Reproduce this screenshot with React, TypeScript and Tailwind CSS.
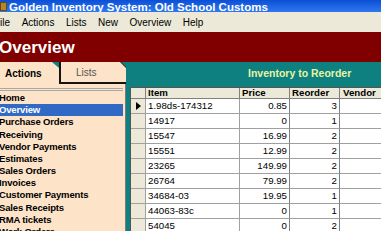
import { Fragment } from 'react';

const menus = ['File', 'Actions', 'Lists', 'New', 'Overview', 'Help'];

const actions = [
  'Home',
  'Overview',
  'Purchase Orders',
  'Receiving',
  'Vendor Payments',
  'Estimates',
  'Sales Orders',
  'Invoices',
  'Customer Payments',
  'Sales Receipts',
  'RMA tickets',
  'Work Orders',
  'Shipping',
];

interface ReorderRow {
  item: string;
  price: string;
  reorder: number;
}

const rows: ReorderRow[] = [
  { item: '1.98ds-174312', price: '0.85', reorder: 3 },
  { item: '14917', price: '0', reorder: 1 },
  { item: '15547', price: '16.99', reorder: 2 },
  { item: '15551', price: '12.99', reorder: 2 },
  { item: '23265', price: '149.99', reorder: 2 },
  { item: '26764', price: '79.99', reorder: 2 },
  { item: '34684-03', price: '19.95', reorder: 1 },
  { item: '44063-83c', price: '0', reorder: 1 },
  { item: '54045', price: '0', reorder: 2 },
];

const font = { fontFamily: '"Liberation Sans", Arial, sans-serif' };

export default function App() {
  return (
    <div className="w-[381px] h-[231px] overflow-hidden bg-[#0e8080] flex flex-col" style={font}>
      {/* Title bar */}
      <div className="h-[12px] shrink-0 bg-gradient-to-b from-[#0a4fd6] to-[#2f78f0] flex items-end overflow-hidden">
        <div className="w-[7px] h-[9px] mb-[1px] bg-[#b8862a] border border-[#6b4a12] shrink-0" />
        <span className="ml-[2px] text-white font-bold text-[11.5px] leading-[12px] whitespace-nowrap -mb-[1px]">
          Golden Inventory System: Old School Customs
        </span>
      </div>

      {/* Menu bar */}
      <div className="h-[20px] shrink-0 bg-[#ece9d8] flex items-center gap-[11.5px] -ml-[6px] text-[10px] text-black">
        {menus.map((m) => (
          <span key={m} className="whitespace-nowrap">{m}</span>
        ))}
      </div>

      {/* Page header */}
      <div className="h-[30px] shrink-0 bg-[#800000] flex items-center">
        <span className="-ml-[1px] text-white font-bold text-[17px] leading-none">Overview</span>
      </div>

      <div className="flex-1 flex min-h-0">
        {/* Left panel */}
        <div className="w-[126px] shrink-0 flex flex-col min-h-0">
          <div className="h-[22px] shrink-0 flex bg-[#0e8080]">
            <div className="w-[59px] bg-[#fde4c8] [clip-path:polygon(0_0,calc(100%-7px)_0,100%_6px,100%_100%,0_100%)] flex items-center pl-[5px] pt-[1px] text-[10px] font-bold text-black">
              Actions
            </div>
            <div className="flex-1 bg-[#141414] [clip-path:polygon(0_0,calc(100%-5px)_0,100%_5px,100%_100%,0_100%)] pl-[2px] pb-[2px]">
              <div className="h-full bg-[#fde4c8] [clip-path:polygon(0_0,calc(100%-6px)_0,100%_6px,100%_100%,0_100%)] flex items-center pl-[15px] pt-[1px] text-[10px] text-[#555]">
                Lists
              </div>
            </div>
          </div>
          <div className="flex-1 min-h-0 overflow-hidden bg-[#fde4c8] border-r border-[#7a7a7a] pr-[2px] pt-[4px]">
            <div className="h-[3px] border-t border-b border-[#a8a8a8] mb-[1px]" />
            <div className="flex flex-col">
              {actions.map((a) => (
                <div
                  key={a}
                  className={`h-[12.2px] shrink-0 flex items-center -ml-[1px] text-[9.5px] font-bold whitespace-nowrap tracking-[-0.15px] ${
                    a === 'Overview' ? 'bg-[#316ac5] text-white' : 'text-black'
                  }`}
                >
                  {a}
                </div>
              ))}
            </div>
          </div>
        </div>

        {/* Right panel */}
        <div className="flex-1 min-w-0 flex flex-col">
          <div className="h-[25px] shrink-0 pl-[122px] pt-[4px] text-[10.5px] font-bold text-[#e6f5a3] whitespace-nowrap">
            Inventory to Reorder
          </div>
          <div className="flex-1 ml-[4px] bg-white border-l border-t border-[#555] overflow-hidden">
            <div className="grid grid-cols-[15px_94px_50px_50px_60px] auto-rows-[15px] text-[9.7px] text-black [grid-template-rows:11px]">
              <div className="bg-[#ece9d8] border-r border-b border-[#808080]" />
              <div className="bg-[#ece9d8] border-r border-b border-[#808080] font-bold pl-[2px] leading-[10px]">Item</div>
              <div className="bg-[#ece9d8] border-r border-b border-[#808080] font-bold pl-[2px] leading-[10px]">Price</div>
              <div className="bg-[#ece9d8] border-r border-b border-[#808080] font-bold pl-[2px] leading-[10px]">Reorder</div>
              <div className="bg-[#ece9d8] border-b border-[#808080] font-bold pl-[3px] leading-[10px]">Vendor</div>
              {rows.map((r, i) => (
                <Fragment key={r.item}>
                  <div className="bg-[#ece9d8] border-r border-b border-[#a0a0a0] flex items-center justify-center">
                    {i === 0 && (
                      <svg width="5" height="8" viewBox="0 0 5 8">
                        <path d="M0 0 L5 4 L0 8 Z" fill="#000" />
                      </svg>
                    )}
                  </div>
                  <div className="border-r border-b border-[#a0a0a0] flex items-center pl-[2px]">{r.item}</div>
                  <div className="border-r border-b border-[#808080] border-b-[#a0a0a0] flex items-center justify-end pr-[2px]">{r.price}</div>
                  <div className="border-r border-b border-[#808080] border-b-[#a0a0a0] flex items-center justify-end pr-[2px]">{r.reorder}</div>
                  <div className="border-b border-[#a0a0a0]" />
                </Fragment>
              ))}
            </div>
          </div>
        </div>
      </div>
    </div>
  );
}
